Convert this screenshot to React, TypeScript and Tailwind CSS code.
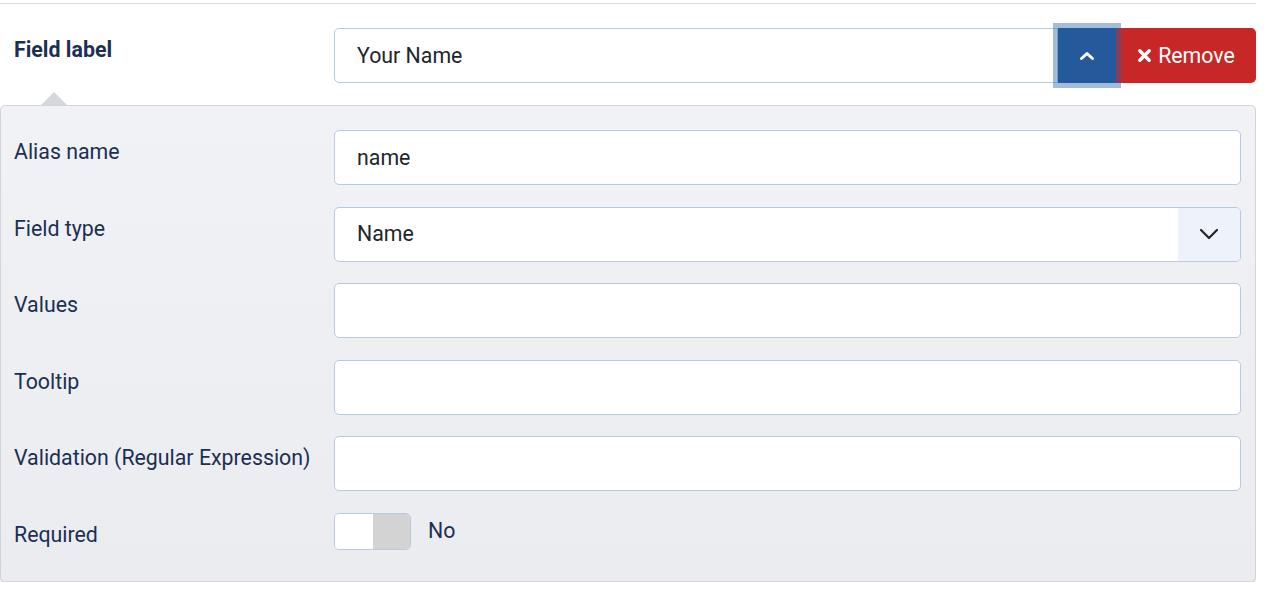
import React from "react";

const Label = ({ children, bold, w = "w-[334px]" }: { children: React.ReactNode; bold?: boolean; w?: string }) => (
  <div className={`${w} shrink-0 pl-[14px] text-[21.33px] leading-[25px] text-[#1b2f52] ${bold ? "font-bold" : ""}`}>
    {children}
  </div>
);

const PLabel = ({ children }: { children: React.ReactNode }) => (
  <div className="w-[333px] shrink-0 pl-[13px] text-[21.33px] leading-[25px] text-[#1b2f52]">{children}</div>
);

const TextInput = ({ value }: { value?: string }) => (
  <div className="flex h-[55px] flex-1 items-center rounded-[5px] border border-[#b8c9e3] bg-white px-[22px] text-[21.33px] text-[#22262a]">
    {value}
  </div>
);

export default function App() {
  return (
    <div className="w-[1256px] bg-white" style={{ fontFamily: "Roboto, 'Liberation Sans', sans-serif" }}>
      <div className="h-[3px]" />
      <div className="h-px bg-[#dcdcdc]" />
      {/* Field label row */}
      <div className="flex items-start pt-[24px]">
        <div className="pt-[9px]">
          <Label bold>Field label</Label>
        </div>
        <div className="flex flex-1 items-center">
          <div className="flex h-[55px] flex-1 items-center rounded-l-[5px] border border-[#b8c9e3] bg-white px-[22px] text-[21.33px] text-[#22262a]">
            Your Name
          </div>
          <div className="relative z-10 flex h-[55px] w-[58px] items-center justify-center bg-[#245a9b] shadow-[0_0_0_5px_rgba(38,96,172,0.42)]">
            <svg width="16" height="10" viewBox="0 0 16 10">
              <path d="M2.5 7.5 L8 2.5 L13.5 7.5" stroke="white" strokeWidth="3" fill="none" strokeLinecap="round" strokeLinejoin="round" />
            </svg>
          </div>
          <div className="flex h-[55px] w-[140px] items-center justify-center gap-[6px] rounded-r-[5px] bg-[#c72727] text-[21.33px] text-white">
            <svg width="15" height="15" viewBox="0 0 16 16">
              <path d="M3 3 L13 13 M13 3 L3 13" stroke="white" strokeWidth="3.6" strokeLinecap="round" />
            </svg>
            <span>Remove</span>
          </div>
        </div>
      </div>
      {/* Arrow */}
      <div className="relative h-[22px]">
        <svg className="absolute left-[41px] top-[9px]" width="26" height="13" viewBox="0 0 26 13">
          <path d="M0 13 L13 0 L26 13 Z" fill="#d6d7db" />
        </svg>
      </div>
      {/* Panel */}
      <div className="flex flex-col gap-[21.5px] rounded-[5px] border border-[#d3d4d8] bg-gradient-to-b from-[#f1f2f6] to-[#ebecf0] pb-[31px] pr-[14px] pt-[24px] shadow-[0_1px_0_#c9cace]">
        <div className="flex items-start">
          <div className="pt-[9px]"><PLabel>Alias name</PLabel></div>
          <TextInput value="name" />
        </div>
        <div className="flex items-start">
          <div className="pt-[9px]"><PLabel>Field type</PLabel></div>
          <div className="flex h-[55px] flex-1 items-center overflow-hidden rounded-[5px] border border-[#b8c9e3] bg-white text-[21.33px] text-[#22262a]">
            <div className="flex-1 px-[22px]">Name</div>
            <div className="flex h-full w-[62px] items-center justify-center bg-[#eef3fb]">
              <svg width="20" height="12" viewBox="0 0 20 12">
                <path d="M2 2 L10 10 L18 2" stroke="#22262a" strokeWidth="2.2" fill="none" strokeLinecap="round" strokeLinejoin="round" />
              </svg>
            </div>
          </div>
        </div>
        <div className="flex items-start">
          <div className="pt-[9px]"><PLabel>Values</PLabel></div>
          <TextInput />
        </div>
        <div className="flex items-start">
          <div className="pt-[9px]"><PLabel>Tooltip</PLabel></div>
          <TextInput />
        </div>
        <div className="flex items-start">
          <div className="pt-[9px]"><PLabel>Validation (Regular Expression)</PLabel></div>
          <TextInput />
        </div>
        <div className="flex items-center">
          <div className="pt-[7px]"><PLabel>Required</PLabel></div>
          <div className="flex items-center gap-[17px]">
            <div className="flex h-[37px] w-[77px] overflow-hidden rounded-[5px] border border-[#b8c9e3]">
              <div className="flex-1 bg-white" />
              <div className="flex-1 bg-[#d3d3d3]" />
            </div>
            <span className="text-[21.33px] text-[#1b2f52]">No</span>
          </div>
        </div>
      </div>
    </div>
  );
}
